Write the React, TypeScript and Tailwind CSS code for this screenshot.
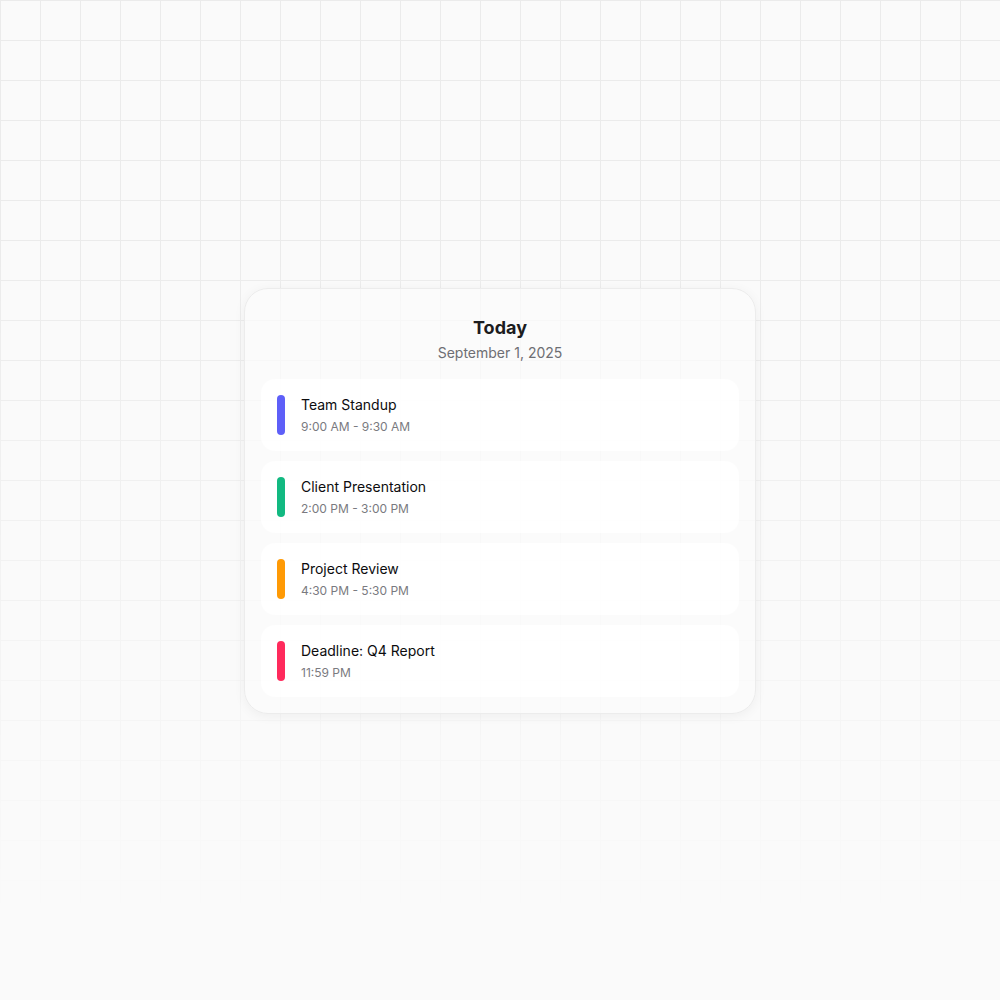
import React from 'react';

type Item = {
    title: string;
    time: string;
    color: string;
};

const items: Item[] = [
    { title: 'Team Standup', time: '9:00 AM - 9:30 AM', color: 'bg-[#5e5ff8]' },
    { title: 'Client Presentation', time: '2:00 PM - 3:00 PM', color: 'bg-[#12b981]' },
    { title: 'Project Review', time: '4:30 PM - 5:30 PM', color: 'bg-[#ff9a05]' },
    { title: 'Deadline: Q4 Report', time: '11:59 PM', color: 'bg-[#ff2a5c]' },
];

const EventRow: React.FC<{ item: Item }> = ({ item }) => {
    return (
        <div className="flex items-center gap-4 rounded-[14px] bg-white/90 px-4 py-4">
            <div className={`h-10 w-2 rounded-full ${item.color}`} />
            <div className="flex flex-col">
                <span className="text-[14px] leading-5 font-normal text-[#0c0c0e]">
                    {item.title}
                </span>
                <span className="mt-1 text-[12px] leading-4 text-[#7a7a80]">
                    {item.time}
                </span>
            </div>
        </div>
    );
};

export default function App() {
    return (
        <div
            className="relative min-h-screen w-full overflow-hidden bg-[#fafafa]"
            style={{ fontFamily: 'Inter, "Noto Sans", sans-serif' }}
        >
            <div className="pointer-events-none absolute inset-0 bg-[linear-gradient(to_right,#ebebeb_1px,transparent_1px),linear-gradient(to_bottom,#ebebeb_1px,transparent_1px)] bg-[size:40px_40px] [mask-image:linear-gradient(to_bottom,black_0%,black_25%,transparent_92%)]" />

            <div className="relative flex min-h-screen items-start justify-center pt-[288px]">
                <div className="w-[512px] rounded-[24px] border border-[#ececec] bg-[#fbfbfb]/70 px-4 pt-[25px] pb-4 shadow-[0_2px_12px_rgba(0,0,0,0.05)]">
                    <div className="mb-[15px] flex flex-col items-center">
                        <h2 className="text-[18px] leading-[28px] font-bold text-[#1c1c1e]">
                            Today
                        </h2>
                        <p className="text-[14px] leading-[22px] text-[#6e6e73]">
                            September 1, 2025
                        </p>
                    </div>
                    <div className="flex flex-col gap-2.5">
                        {items.map((item) => (
                            <EventRow key={item.title} item={item} />
                        ))}
                    </div>
                </div>
            </div>
        </div>
    );
}
